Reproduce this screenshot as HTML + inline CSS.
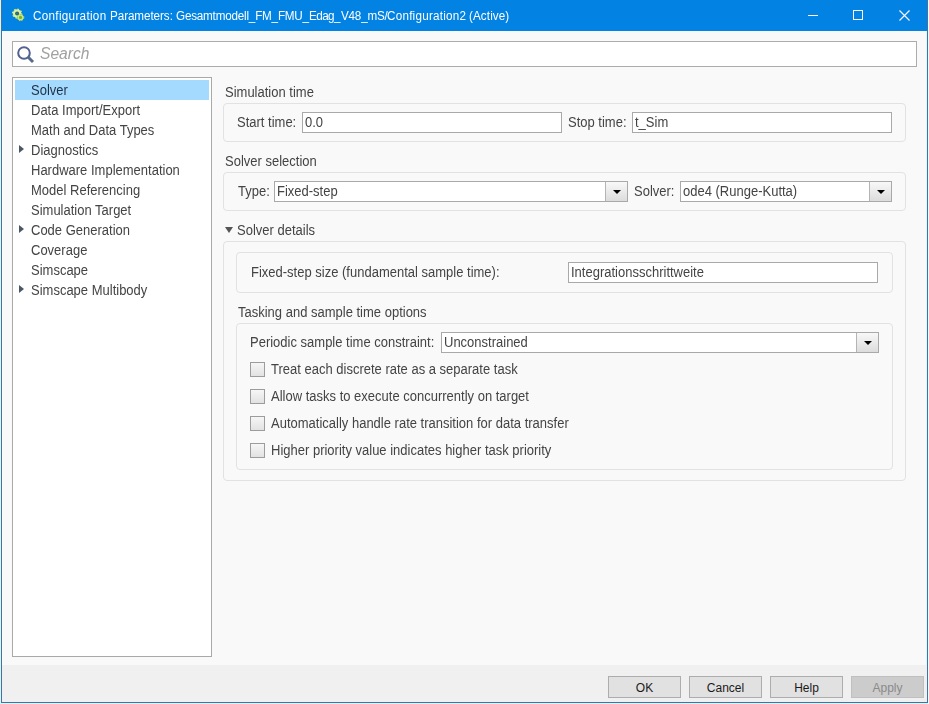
<!DOCTYPE html>
<html><head><meta charset="utf-8">
<style>
*{margin:0;padding:0;box-sizing:border-box}
html,body{width:929px;height:704px;overflow:hidden;background:#d4f6fc;font-family:"Liberation Sans",sans-serif}
.a{position:absolute}
#win{position:absolute;left:1px;top:0;width:927px;height:703px;border:1px solid #44729f;border-top:none;background:#f9f9f9;box-shadow:inset 1px 0 #fdfdfd,inset -1px 0 #dbf9fd,inset 0 -1px #fbfbfb}
#title{position:absolute;left:0;top:0;width:925px;height:31px;background:#0282e3}
.t{position:absolute;white-space:nowrap;will-change:transform;font-size:13px;color:#444;line-height:15px;transform:scaleY(1.12);transform-origin:0 12px}
.tt{top:8px;font-size:11.68px;color:#fff}
.grp{position:absolute;border:1px solid #e2e2e2;border-radius:4px;background:#f9f9f9}
.inp{position:absolute;background:#fff;border:1px solid #a9a9a9}
.cb{position:absolute;width:15px;height:15px;border:1px solid #9c9c9c;background:linear-gradient(#f6f6f6,#e2e2e2)}
.btn{position:absolute;top:676px;width:73px;height:22px;background:#e1e1e1;border:1px solid #adadad;font-size:12px;color:#1a1a1a;text-align:center;line-height:20px;padding-top:1px}
.dd{position:absolute;top:0;right:0;width:22px;height:100%;border-left:1px solid #b4b4b4;background:linear-gradient(#f8f8f8,#dcdcdc)}
.dd:after{content:"";position:absolute;left:6.5px;top:8px;border-left:4px solid transparent;border-right:4px solid transparent;border-top:4.5px solid #000}
.tri{position:absolute;width:0;height:0;border-top:4px solid transparent;border-bottom:4px solid transparent;border-left:5.5px solid #4a5866}
</style></head><body>
<div class="a" style="left:928px;top:0;width:1px;height:704px;background:#eefafd"></div>
<div id="win">
 <div id="title">
  <svg class="a" style="left:10px;top:6px" width="16" height="16" viewBox="0 0 16 16">
   <circle cx="5.1" cy="7.6" r="4.6" fill="#5f8a4a" opacity="0.55"/>
   <circle cx="5.1" cy="7.5" r="4.2" fill="#d8f2a2"/>
   <circle cx="5.1" cy="7.5" r="4.5" fill="none" stroke="#d8f2a2" stroke-width="1.1" stroke-dasharray="1.6 1.9"/>
   <circle cx="5.1" cy="7.5" r="2.0" fill="#2f5f5a"/>
   <circle cx="5.1" cy="7.5" r="1.1" fill="#2a74b0"/>
   <circle cx="8.5" cy="11.5" r="3.4" fill="#4f7a3a" opacity="0.6"/>
   <circle cx="8.5" cy="11.4" r="3.0" fill="#c6ea88"/>
   <circle cx="8.5" cy="11.4" r="3.3" fill="none" stroke="#c6ea88" stroke-width="0.9" stroke-dasharray="1.3 1.4"/>
   <circle cx="8.5" cy="11.4" r="1.6" fill="#76b52c"/>
  </svg>
    <div class="t tt" style="left:31.4px;letter-spacing:0.31px">Configuration&nbsp;</div>
  <div class="t tt" style="left:108.1px;letter-spacing:-0.07px">Parameters:&nbsp;</div>
  <div class="t tt" style="left:174.4px;letter-spacing:-0.2px">Gesamtmodell_FM_FMU_</div>
  <div class="t tt" style="left:306.9px;letter-spacing:-0.55px">Edag_</div>
  <div class="t tt" style="left:338.8px;letter-spacing:-0.21px">V48_mS/</div>
  <div class="t tt" style="left:384.7px;letter-spacing:0.24px">Configuration2&nbsp;</div>
  <div class="t tt" style="left:467.2px;letter-spacing:0.1px">(Active)</div>
  <div class="a" style="left:806px;top:15px;width:10px;height:1px;background:#fff"></div>
  <div class="a" style="left:851px;top:10px;width:10px;height:10px;border:1px solid #fff"></div>
  <svg class="a" style="left:897px;top:10px" width="11" height="11" viewBox="0 0 11 11"><path d="M0.5 0.5L10.5 10.5M10.5 0.5L0.5 10.5" stroke="#fff" stroke-width="1.1"/></svg>
 </div>
</div>
<!-- search -->
<div class="inp" style="left:12px;top:41px;width:905px;height:26px;border-color:#acacac"></div>
<svg class="a" style="left:16px;top:45px" width="20" height="20" viewBox="0 0 20 20"><circle cx="8" cy="8" r="5.8" fill="none" stroke="#52618f" stroke-width="2"/><path d="M11.8 11.8L17 17" stroke="#556a8c" stroke-width="3"/></svg>
<div class="t" style="left:39.5px;top:44.5px;font-size:15.6px;font-style:italic;color:#a0a0a0;line-height:18px;transform:none">Search</div>
<!-- tree -->
<div class="inp" style="left:12px;top:77px;width:200px;height:580px;border-color:#a9a9a9"></div>
<div class="a" style="left:15px;top:80px;width:194px;height:20px;background:#a4dafd"></div>
<div class="t" style="left:31px;top:82.5px;color:#1e3045">Solver</div>
<div class="t" style="left:31px;top:102.5px">Data Import/Export</div>
<div class="t" style="left:31px;top:122.5px">Math and Data Types</div>
<div class="tri" style="left:19px;top:145px"></div>
<div class="t" style="left:31px;top:142.5px">Diagnostics</div>
<div class="t" style="left:31px;top:162.5px">Hardware Implementation</div>
<div class="t" style="left:31px;top:182.5px">Model Referencing</div>
<div class="t" style="left:31px;top:202.5px">Simulation Target</div>
<div class="tri" style="left:19px;top:225px"></div>
<div class="t" style="left:31px;top:222.5px">Code Generation</div>
<div class="t" style="left:31px;top:242.5px">Coverage</div>
<div class="t" style="left:31px;top:262.5px">Simscape</div>
<div class="tri" style="left:19px;top:285px"></div>
<div class="t" style="left:31px;top:282.5px">Simscape Multibody</div>

<!-- right panel -->
<div class="t" style="left:225px;top:85px">Simulation time</div>
<div class="grp" style="left:223px;top:103px;width:683px;height:39px"></div>
<div class="t" style="left:237px;top:115px">Start time:</div>
<div class="inp" style="left:302px;top:112px;width:260px;height:21px"></div>
<div class="t" style="left:305px;top:115px">0.0</div>
<div class="t" style="left:568px;top:115px">Stop time:</div>
<div class="inp" style="left:632px;top:112px;width:260px;height:21px"></div>
<div class="t" style="left:635px;top:115px">t_Sim</div>

<div class="t" style="left:225px;top:154px">Solver selection</div>
<div class="grp" style="left:223px;top:172px;width:683px;height:39px"></div>
<div class="t" style="left:238px;top:184px">Type:</div>
<div class="inp" style="left:274px;top:181px;width:354px;height:21px"><div class="dd"></div></div>
<div class="t" style="left:277px;top:184px">Fixed-step</div>
<div class="t" style="left:634px;top:184px">Solver:</div>
<div class="inp" style="left:680px;top:181px;width:212px;height:21px"><div class="dd"></div></div>
<div class="t" style="left:683px;top:184px">ode4 (Runge-Kutta)</div>

<div class="a" style="left:225px;top:227px;width:0;height:0;border-left:4px solid transparent;border-right:4px solid transparent;border-top:6px solid #555"></div>
<div class="t" style="left:237px;top:223px">Solver details</div>
<div class="grp" style="left:223px;top:241px;width:683px;height:240px"></div>
<div class="grp" style="left:236px;top:252px;width:657px;height:41px"></div>
<div class="t" style="left:250.5px;top:265px">Fixed-step size (fundamental sample time):</div>
<div class="inp" style="left:568px;top:262px;width:310px;height:21px"></div>
<div class="t" style="left:571px;top:265px">Integrationsschrittweite</div>

<div class="t" style="left:238px;top:305px">Tasking and sample time options</div>
<div class="grp" style="left:236px;top:323px;width:657px;height:147px"></div>
<div class="t" style="left:250px;top:335px">Periodic sample time constraint:</div>
<div class="inp" style="left:441px;top:332px;width:438px;height:21px"><div class="dd"></div></div>
<div class="t" style="left:444px;top:335px">Unconstrained</div>

<div class="cb" style="left:250px;top:362px"></div>
<div class="t" style="left:271px;top:362px">Treat each discrete rate as a separate task</div>
<div class="cb" style="left:250px;top:389px"></div>
<div class="t" style="left:271px;top:389px">Allow tasks to execute concurrently on target</div>
<div class="cb" style="left:250px;top:416px"></div>
<div class="t" style="left:271px;top:416px">Automatically handle rate transition for data transfer</div>
<div class="cb" style="left:250px;top:443px"></div>
<div class="t" style="left:271px;top:443px">Higher priority value indicates higher task priority</div>

<!-- button bar -->
<div class="a" style="left:2px;top:665px;width:925px;height:37px;background:#f0f0f0"></div>
<div class="btn" style="left:608px">OK</div>
<div class="btn" style="left:689px">Cancel</div>
<div class="btn" style="left:770px">Help</div>
<div class="btn" style="left:851px;background:#cccccc;border-color:#bfbfbf;color:#8a8a8a">Apply</div>
</body></html>
